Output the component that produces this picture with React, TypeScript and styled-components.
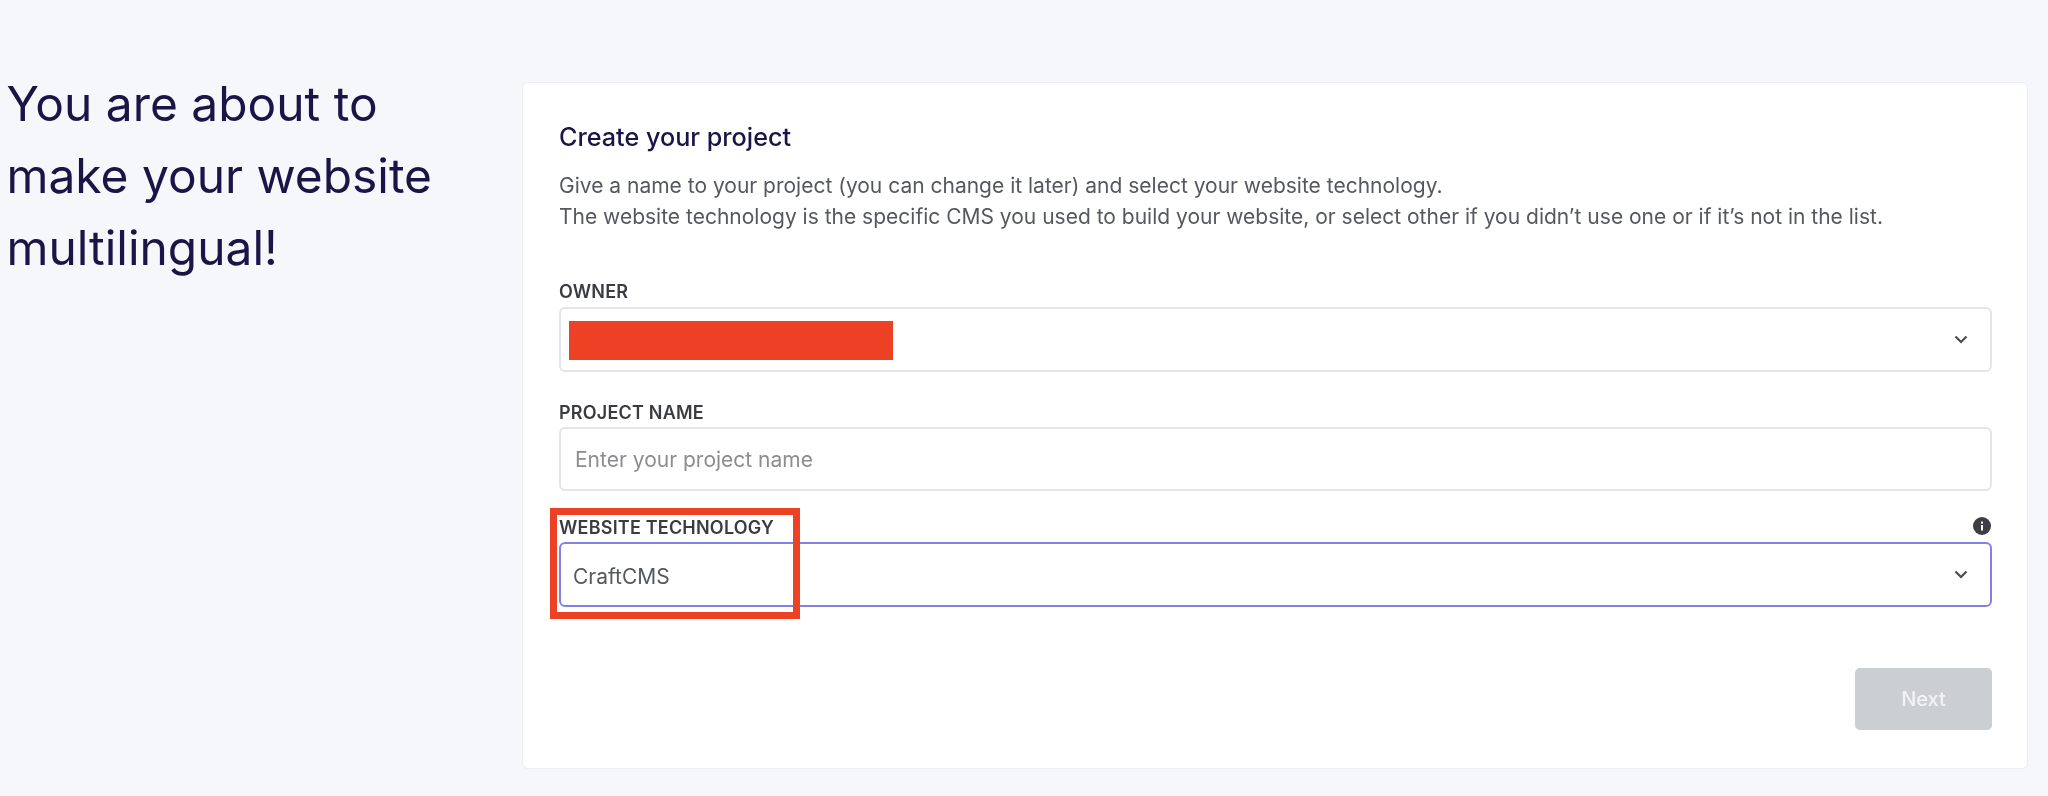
import React from "react";
import styled, { createGlobalStyle } from "styled-components";

const Global = createGlobalStyle`
  html, body { margin: 0; padding: 0; background: #f6f7fb; }
  body { font-family: Inter, "Noto Sans", sans-serif; }
  * { box-sizing: border-box; }
`;

const Page = styled.div`
  width: 2048px;
  height: 796px;
  overflow: hidden;
  display: flex;
  align-items: flex-start;
  padding: 68px 20px 0 6.5px;
  background: #f6f7fb;
  filter: blur(0.45px);
`;

const Intro = styled.h1`
  width: 515px;
  flex: none;
  margin: 0;
  font-size: 47.9px;
  line-height: 72px;
  font-weight: 400;
  color: #1a1547;
`;

const Card = styled.section`
  position: relative;
  flex: none;
  width: 1506.5px;
  height: 687px;
  margin-top: 14px;
  padding: 39px 35px 0 36.5px;
  background: #ffffff;
  border: 1px solid #eceef3;
  border-radius: 6px;
`;

const Title = styled.h2`
  margin: 0;
  font-size: 25.2px;
  line-height: 30px;
  font-weight: 500;
  color: #1a1547;
`;

const Description = styled.p`
  margin: 18px 0 0;
  font-size: 21px;
  line-height: 31px;
  font-weight: 400;
  color: #55585f;
`;

const Field = styled.div<{ $gap: number }>`
  margin-top: ${(p) => p.$gap}px;
`;

const LabelRow = styled.div<{ $gap: number }>`
  display: flex;
  align-items: center;
  justify-content: space-between;
  height: 20px;
  margin-bottom: ${(p) => p.$gap}px;
`;

const Label = styled.label`
  font-size: 18px;
  line-height: 20px;
  font-weight: 600;
  letter-spacing: 0.2px;
  color: #3a3c42;
  text-transform: uppercase;
`;

const Box = styled.div<{ $focused?: boolean }>`
  display: flex;
  align-items: center;
  justify-content: space-between;
  height: 65px;
  padding: 0 22px 0 ${(p) => (p.$focused ? 12 : 8)}px;
  border: 2px solid ${(p) => (p.$focused ? "#8480e8" : "#e3e5e9")};
  border-radius: 6px;
  background: #ffffff;
`;

const Redaction = styled.div`
  width: 324px;
  height: 39px;
  margin-top: 1px;
  background: #ec4125;
`;

const SelectValue = styled.span`
  padding-top: 3px;
  font-size: 21px;
  color: #55585f;
`;

const TextInput = styled.input`
  display: block;
  width: 100%;
  height: 64px;
  padding: 0 14px;
  border: 2px solid #e3e5e9;
  border-radius: 6px;
  outline: none;
  background: #ffffff;
  font-family: inherit;
  font-size: 21px;
  &::placeholder {
    color: #8b8d91;
    opacity: 1;
  }
`;

const Chevron = styled.svg`
  width: 14px;
  height: 9px;
  flex: none;
  fill: none;
  stroke: #4a4c52;
  stroke-width: 2.2;
`;

const InfoIcon = styled.svg`
  width: 18px;
  height: 18px;
  flex: none;
  margin: 0 1px 5px 0;
`;

const Highlight = styled.div`
  position: absolute;
  left: 27.5px;
  top: 425px;
  width: 250px;
  height: 111px;
  border: 7.5px solid #ec4125;
  pointer-events: none;
`;

const Footer = styled.div`
  display: flex;
  justify-content: flex-end;
  margin-top: 61px;
`;

const NextButton = styled.button`
  width: 137px;
  height: 62px;
  border: none;
  border-radius: 5px;
  background: #cccfd2;
  color: #f2f3f4;
  font-family: inherit;
  font-size: 20px;
  font-weight: 500;
`;

const ChevronDown = () => (
  <Chevron viewBox="0 0 14 9">
    <path d="M1.5 1.5 L7 7 L12.5 1.5" />
  </Chevron>
);

export default function App() {
  return (
    <>
      <Global />
      <Page>
        <Intro>
          You are about to
          <br />
          make your website
          <br />
          multilingual!
        </Intro>
        <Card>
          <Title>Create your project</Title>
          <Description>
            Give a name to your project (you can change it later) and select your website technology.
            <br />
            The website technology is the specific CMS you used to build your website, or select other if you didn’t use one or if it’s not in the list.
          </Description>
          <Field $gap={50}>
            <LabelRow $gap={5}>
              <Label>Owner</Label>
            </LabelRow>
            <Box>
              <Redaction />
              <ChevronDown />
            </Box>
          </Field>
          <Field $gap={31}>
            <LabelRow $gap={4}>
              <Label>Project name</Label>
            </LabelRow>
            <TextInput placeholder="Enter your project name" />
          </Field>
          <Field $gap={27}>
            <LabelRow $gap={4}>
              <Label>Website technology</Label>
              <InfoIcon viewBox="0 0 18 18">
                <circle cx="9" cy="9" r="9" fill="#3c3e44" />
                <rect x="8" y="8" width="2" height="5.5" fill="#ffffff" />
                <rect x="8" y="4.6" width="2" height="2" fill="#ffffff" />
              </InfoIcon>
            </LabelRow>
            <Box $focused>
              <SelectValue>CraftCMS</SelectValue>
              <ChevronDown />
            </Box>
          </Field>
          <Footer>
            <NextButton disabled>Next</NextButton>
          </Footer>
          <Highlight />
        </Card>
      </Page>
    </>
  );
}
